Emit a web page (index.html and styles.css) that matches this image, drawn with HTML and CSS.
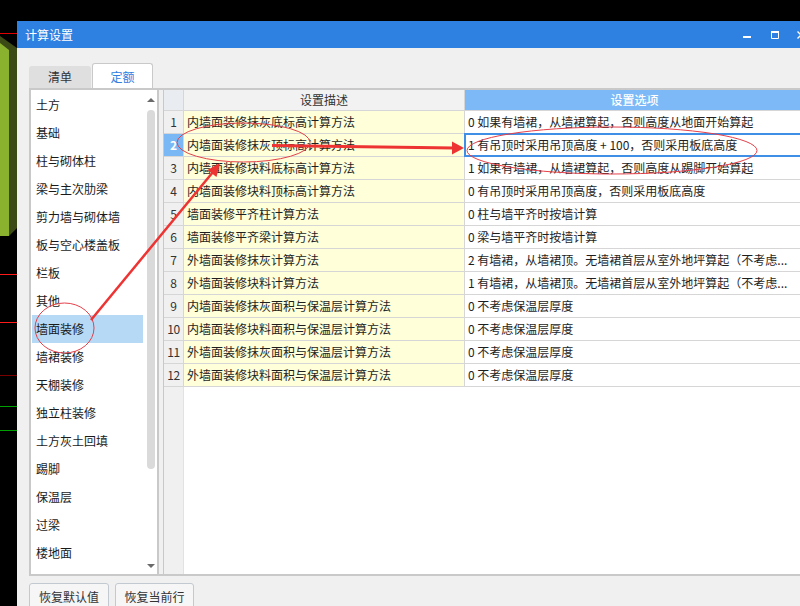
FILE: index.html
```html
<!DOCTYPE html>
<html lang="zh-CN">
<head>
<meta charset="utf-8">
<title>计算设置</title>
<link rel="stylesheet" href="styles.css">
</head>
<body>
<svg class="desk" width="17" height="606" viewBox="0 0 17 606">
  <rect x="0" y="33" width="17" height="1" fill="#e00000"/>
  <polygon points="0,36 17,48 17,228 9,236 0,236" fill="#3c4a15"/>
  <polygon points="0,43 9,50 9,236 0,236" fill="#8bb22e"/>
  <rect x="0" y="274" width="17" height="1" fill="#ff1a1a"/>
  <rect x="0" y="322" width="17" height="1" fill="#ff1a1a"/>
  <rect x="0" y="375" width="17" height="1" fill="#7a0000"/>
  <rect x="0" y="406" width="17" height="1" fill="#00a000"/>
  <rect x="0" y="430" width="17" height="1" fill="#00a000"/>
</svg>

<div class="dialog">
  <div class="titlebar">
    <span class="title">计算设置</span>
    <div class="controls">
      <svg class="ctl min" width="8" height="27" viewBox="0 0 8 27"><rect x="0" y="15" width="8" height="2" fill="#fff"/></svg>
      <svg class="ctl max" width="8" height="27" viewBox="0 0 8 27"><path d="M0.5 11.5h7v6h-7z" fill="none" stroke="#fff"/><rect x="0" y="10" width="8" height="2" fill="#fff"/></svg>
      <svg class="ctl close" width="8" height="27" viewBox="0 0 8 27"><path d="M0.5 10.5l7 7M7.5 10.5l-7 7" stroke="#fff" stroke-width="1.3"/></svg>
    </div>
  </div>

  <div class="tabs">
    <div class="tab">清单</div>
    <div class="tab active">定额</div>
  </div>

  <div class="pane">
    <div class="list">
      <ul class="items">
        <li>土方</li>
        <li>基础</li>
        <li>柱与砌体柱</li>
        <li>梁与主次肋梁</li>
        <li>剪力墙与砌体墙</li>
        <li>板与空心楼盖板</li>
        <li>栏板</li>
        <li>其他</li>
        <li class="sel">墙面装修</li>
        <li>墙裙装修</li>
        <li>天棚装修</li>
        <li>独立柱装修</li>
        <li>土方灰土回填</li>
        <li>踢脚</li>
        <li>保温层</li>
        <li>过梁</li>
        <li>楼地面</li>
      </ul>
      <div class="vscroll">
        <span class="arrow up"></span>
        <span class="thumb"></span>
        <span class="spacer"></span>
        <span class="arrow down"></span>
      </div>
    </div>
    <div class="splitter"></div>
    <div class="grid">
      <div class="table">
        <div class="c gut head"></div>
        <div class="c desc head">设置描述</div>
        <div class="c opt head">设置选项</div>

        <div class="c gut">1</div>
        <div class="c desc">内墙面装修抹灰底标高计算方法</div>
        <div class="c opt">0 如果有墙裙，从墙裙算起，否则高度从地面开始算起</div>

        <div class="c gut cur">2</div>
        <div class="c desc">内墙面装修抹灰顶标高计算方法</div>
        <div class="c opt focus">1 有吊顶时采用吊顶高度 + 100，否则采用板底高度</div>

        <div class="c gut">3</div>
        <div class="c desc">内墙面装修块料底标高计算方法</div>
        <div class="c opt">1 如果有墙裙，从墙裙算起，否则高度从踢脚开始算起</div>

        <div class="c gut">4</div>
        <div class="c desc">内墙面装修块料顶标高计算方法</div>
        <div class="c opt">0 有吊顶时采用吊顶高度，否则采用板底高度</div>

        <div class="c gut">5</div>
        <div class="c desc">墙面装修平齐柱计算方法</div>
        <div class="c opt">0 柱与墙平齐时按墙计算</div>

        <div class="c gut">6</div>
        <div class="c desc">墙面装修平齐梁计算方法</div>
        <div class="c opt">0 梁与墙平齐时按墙计算</div>

        <div class="c gut">7</div>
        <div class="c desc">外墙面装修抹灰计算方法</div>
        <div class="c opt">2 有墙裙，从墙裙顶。无墙裙首层从室外地坪算起（不考虑...</div>

        <div class="c gut">8</div>
        <div class="c desc">外墙面装修块料计算方法</div>
        <div class="c opt">1 有墙裙，从墙裙顶。无墙裙首层从室外地坪算起（不考虑...</div>

        <div class="c gut">9</div>
        <div class="c desc">内墙面装修抹灰面积与保温层计算方法</div>
        <div class="c opt">0 不考虑保温层厚度</div>

        <div class="c gut">10</div>
        <div class="c desc">内墙面装修块料面积与保温层计算方法</div>
        <div class="c opt">0 不考虑保温层厚度</div>

        <div class="c gut">11</div>
        <div class="c desc">外墙面装修抹灰面积与保温层计算方法</div>
        <div class="c opt">0 不考虑保温层厚度</div>

        <div class="c gut">12</div>
        <div class="c desc">外墙面装修块料面积与保温层计算方法</div>
        <div class="c opt">0 不考虑保温层厚度</div>
      </div>
    </div>
  </div>

  <div class="buttons">
    <button class="btn">恢复默认值</button>
    <button class="btn">恢复当前行</button>
  </div>
</div>

<svg class="annot" width="800" height="606" viewBox="0 0 800 606">
  <g fill="none" stroke="#e5404a" stroke-width="1">
    <ellipse cx="243.5" cy="142.5" rx="66.5" ry="19.5"/>
    <ellipse cx="612" cy="150.5" rx="145" ry="23.5"/>
    <ellipse cx="64.5" cy="328" rx="29.5" ry="25"/>
  </g>
  <line x1="272" y1="145.5" x2="454" y2="148" stroke="#ee3333" stroke-width="3"/>
  <polygon points="452,141.5 464,148 452,154.5" fill="#ee3333"/>
  <line x1="91" y1="320" x2="213" y2="172" stroke="#ee3333" stroke-width="2.5"/>
  <polygon points="220,163 216.5,177 207.5,170" fill="#ee3333"/>
</svg>
</body>
</html>
```

FILE: styles.css
```css
* {
  box-sizing: border-box;
}

html {
  background: #000;
}

body {
  margin: 0;
  padding: 21px 0 0 17px;
  width: 800px;
  height: 606px;
  overflow: hidden;
  position: relative;
  font-family: "Noto Sans CJK SC", "Noto Sans", sans-serif;
  font-size: 12px;
  color: #1e1e1e;
}

.desk {
  position: absolute;
  left: 0;
  top: 0;
}

.annot {
  position: absolute;
  left: 0;
  top: 0;
  pointer-events: none;
}

.dialog {
  width: 790px;
  height: 600px;
  background: #f0f0f0;
  display: flex;
  flex-direction: column;
}

/* title bar */
.titlebar {
  height: 27px;
  flex: none;
  background: #2e80e1;
  color: #fff;
  display: flex;
  align-items: center;
  padding-left: 8px;
}

.title {
  font-size: 12px;
  line-height: 27px;
}

.controls {
  margin-left: auto;
  display: flex;
  align-items: center;
  height: 27px;
}

.ctl {
  display: block;
}

.ctl.min {
  margin-right: 20px;
}

.ctl.max {
  margin-right: 18px;
}

.ctl.close {
  margin-right: 2px;
}

/* tabs */
.tabs {
  height: 40px;
  flex: none;
  display: flex;
  align-items: flex-end;
  padding-left: 12px;
  gap: 1px;
}

.tab {
  width: 62px;
  height: 22px;
  background: #dfdfdf;
  border-radius: 3px 3px 0 0;
  text-align: center;
  line-height: 22px;
  color: #333;
}

.tab.active {
  width: 61px;
  height: 25px;
  background: #fff;
  border: 1px solid #c9c9c9;
  border-bottom: none;
  color: #2e80e1;
  padding-top: 2px;
  line-height: 22px;
}

/* pane */
.pane {
  height: 488px;
  flex: none;
  margin-left: 12px;
  border-top: 2px solid #c9c9c9;
  border-bottom: 2px solid #c9c9c9;
  display: flex;
}

.list {
  width: 130px;
  flex: none;
  background: #fff;
  border-left: 2px solid #c9c9c9;
  border-right: 2px solid #c9c9c9;
  display: flex;
}

.items {
  list-style: none;
  margin: 0;
  padding: 1px 0 0 1px;
  width: 113px;
  flex: none;
}

.items li {
  height: 28px;
  line-height: 28px;
  padding-left: 4px;
  width: 111px;
  color: #1a1a1a;
  white-space: nowrap;
}

.items li.sel {
  background: #b6d9f5;
}

.vscroll {
  width: 13px;
  flex: none;
  display: flex;
  flex-direction: column;
  align-items: center;
}

.arrow {
  display: flex;
  align-items: center;
  justify-content: center;
  width: 13px;
}

.arrow::before {
  content: "";
  display: block;
  border-left: 4px solid transparent;
  border-right: 4px solid transparent;
}

.arrow.up {
  height: 19px;
  padding-top: 1px;
}

.arrow.up::before {
  border-bottom: 4px solid #6a6a6a;
}

.arrow.down {
  height: 16px;
}

.arrow.down::before {
  border-top: 4px solid #6a6a6a;
}

.thumb {
  display: block;
  width: 8px;
  height: 359px;
  margin-top: 1px;
  border-radius: 4px;
  background: #dadada;
}

.spacer {
  flex: 1;
}

.splitter {
  width: 4px;
  flex: none;
  background: #f0f0f0;
}

/* grid */
.grid {
  flex: 1;
  min-width: 0;
  overflow: hidden;
  border-left: 1px solid #c8c8c8;
  background: linear-gradient(to right, #f0f0f0 0 19px, #e2e2e2 19px 20px, #fff 20px);
}

.table {
  display: grid;
  grid-template-columns: 20px 281px 350px;
  grid-template-rows: 21px repeat(12, 23px);
}

.c {
  border-right: 1px solid #d6d6d6;
  border-bottom: 1px solid #d6d6d6;
  line-height: 22px;
  white-space: nowrap;
  overflow: hidden;
}

.c.head {
  line-height: 20px;
  text-align: center;
}

.gut {
  background: #f0f0f0;
  text-align: center;
  color: #333;
  padding: 0;
  letter-spacing: -0.3px;
}

.gut.head {
  background: #e9ecf1;
}

.gut.cur {
  background: #7ab8f5;
  color: #fff;
  font-weight: 700;
}

.desc {
  background: #ffffd9;
  padding-left: 3px;
}

.desc.head {
  background: #f2f2f2;
  color: #333;
  padding-left: 0;
}

.opt {
  background: #fff;
  padding-left: 3px;
}

.opt.head {
  background: #7cb9f6;
  color: #fff;
  font-weight: 500;
  padding: 0 10px 0 0;
}

.opt.focus {
  position: relative;
  overflow: visible;
}

.opt.focus::after {
  content: "";
  position: absolute;
  left: -1px;
  top: -1px;
  right: -40px;
  bottom: -1px;
  border: 2px solid #3f8fe6;
}

/* buttons */
.buttons {
  display: flex;
  gap: 6px;
  margin: 7px 0 0 12px;
}

.btn {
  width: 80px;
  height: 28px;
  border: 1px solid #c3c9d1;
  border-radius: 3px;
  background: #f6f6f6;
  font-family: inherit;
  font-size: 12px;
  color: #333;
  padding: 0;
  line-height: 26px;
}

.btn + .btn {
  width: 79px;
}
```
